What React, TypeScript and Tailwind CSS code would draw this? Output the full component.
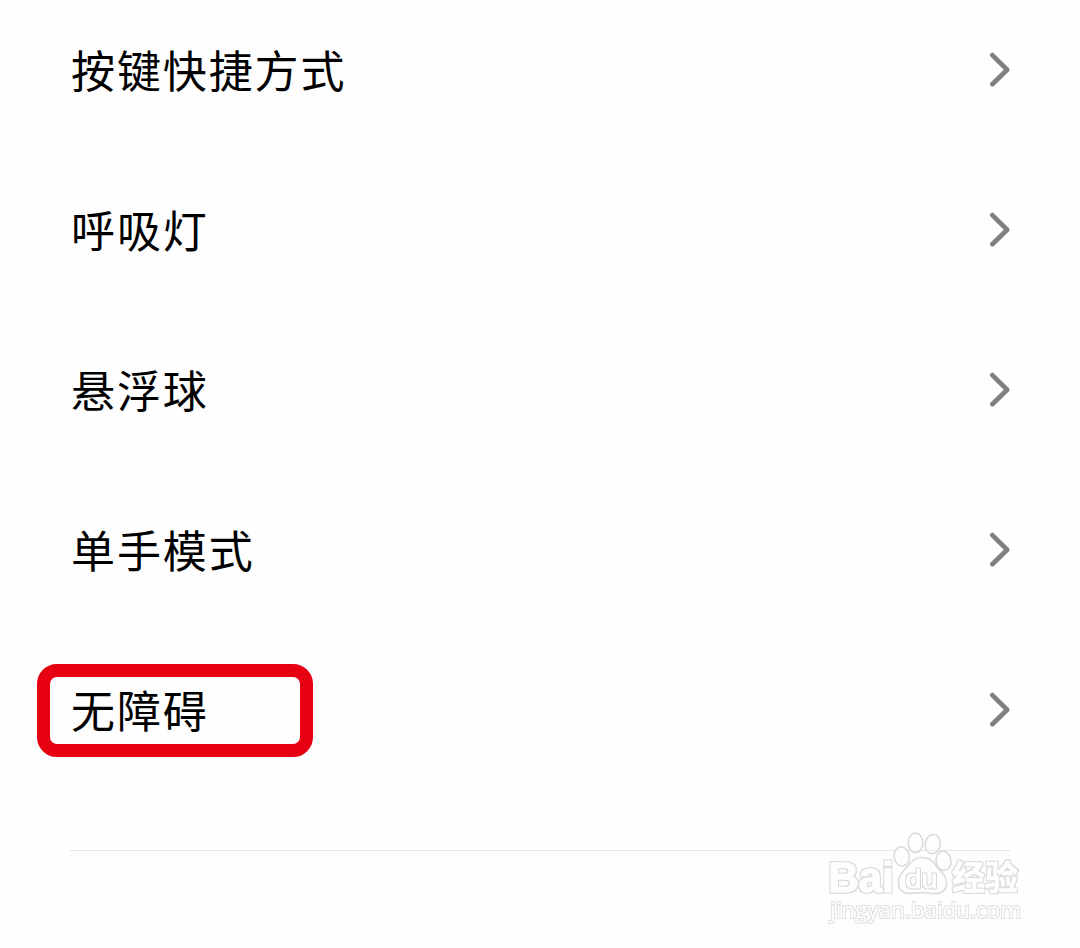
interface SettingsRowProps {
  label: string;
  highlighted?: boolean;
}

const rows: SettingsRowProps[] = [
  { label: "按键快捷方式" },
  { label: "呼吸灯" },
  { label: "悬浮球" },
  { label: "单手模式" },
  { label: "无障碍", highlighted: true },
];

const Chevron = () => (
  <svg className="h-10 w-6" viewBox="0 0 24 40" fill="none" stroke="#808080">
    <path d="M4.3 5.1L19.2 19.7L4.3 34.2" strokeWidth={4.8} strokeLinecap="round" strokeLinejoin="round" />
  </svg>
);

const SettingsRow = ({ label, highlighted = false }: SettingsRowProps) => {
  return (
    <li className="relative flex h-40 items-center justify-between pl-[71px] pr-[68px]">
      <span className="pb-[2px] text-[44px] leading-[64px] tracking-[1.9px] text-black">{label}</span>
      <Chevron />
      {highlighted && (
        <div className="absolute left-[37px] top-[34px] h-[93px] w-[276px] rounded-[20px] border-[13px] border-[#e60012]" />
      )}
    </li>
  );
};

const Watermark = () => (
  <svg
    className="absolute left-[820px] top-[825px] h-[105px] w-[210px]"
    viewBox="820 825 210 105"
    fill="#fefefe"
    stroke="#dadada"
    strokeWidth={1.5}
    strokeLinejoin="round"
  >
    <defs>
      {/* thin grey rim around white lettering */}
      <filter id="rim" x="-5%" y="-10%" width="110%" height="120%">
        <feMorphology in="SourceAlpha" operator="dilate" radius="0.8" result="grown" />
        <feGaussianBlur in="grown" stdDeviation="0.4" result="soft" />
        <feFlood floodColor="#d8d8d8" />
        <feComposite in2="soft" operator="in" result="edge" />
        <feMerge>
          <feMergeNode in="edge" />
          <feMergeNode in="SourceGraphic" />
        </feMerge>
      </filter>
    </defs>
    {/* paw */}
    <g fillOpacity={0.5}>
      <ellipse cx="901.7" cy="856.5" rx="7.6" ry="9.7" transform="rotate(-8 901.7 856.5)" />
      <ellipse cx="915.5" cy="842.8" rx="7.3" ry="9.8" />
      <ellipse cx="932.7" cy="844" rx="7.5" ry="9.6" transform="rotate(10 932.7 844)" />
      <ellipse cx="943.5" cy="860.8" rx="7.5" ry="9.6" transform="rotate(-8 943.5 860.8)" />
    </g>
    <path d="M922 857.5C914 857.5 911 862 907 867C902 873 898.5 875 898.5 883C898.5 889 902 893 909 893.5C914 893.5 917 892.5 922 892.5C927 892.5 931 894 936 893.5C943 893 946.5 889 946.5 883C946.5 876 942 873 937 867C933 861.5 930 857.5 922 857.5Z" />
    <g stroke="#fefefe" filter="url(#rim)">
      <text
        className="font-['Liberation_Sans',sans-serif] font-bold"
        strokeWidth={1.4}
        x="828.5"
        y="891.5"
        fontSize="42"
        textLength="65"
        lengthAdjust="spacingAndGlyphs"
      >
        Bai
      </text>
      <text
        className="font-['Liberation_Sans',sans-serif]"
        strokeWidth={0.8}
        x="905.5"
        y="887.5"
        fontSize="26"
        textLength="32"
        lengthAdjust="spacingAndGlyphs"
      >
        du
      </text>
      <text
        className="font-['Noto_Sans_CJK_SC',sans-serif] font-bold"
        strokeWidth={0.6}
        x="952"
        y="889.5"
        fontSize="34"
        textLength="66"
        lengthAdjust="spacingAndGlyphs"
      >
        经验
      </text>
    </g>
    <g stroke="none" filter="url(#rim)" opacity={0.75}>
      <text
        className="font-['Open_Sans',sans-serif] font-medium"
        x="830"
        y="918"
        fontSize="21.5"
        textLength="191"
        lengthAdjust="spacingAndGlyphs"
      >
        jingyan.baidu.com
      </text>
    </g>
  </svg>
);

export default function App() {
  return (
    <main className="relative h-[948px] w-[1080px] overflow-hidden bg-[#fefefe] font-['Noto_Sans_CJK_SC',sans-serif]">
      <ul className="-mt-[10px]">
        {rows.map((row) => (
          <SettingsRow key={row.label} {...row} />
        ))}
      </ul>
      <hr className="ml-[70px] mr-[70px] mt-[60px] border-t border-[#e4e4e4]" />
      <Watermark />
    </main>
  );
}
